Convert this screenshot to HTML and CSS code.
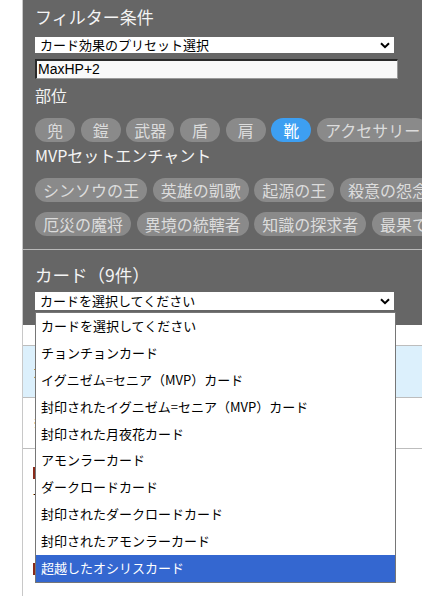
FILE: index.html
```html
<!DOCTYPE html>
<html lang="ja">
<head>
<meta charset="utf-8">
<title>カード検索</title>
<link rel="stylesheet" href="styles.css">
</head>
<body>
<div class="page">
  <div class="panel">
    <section class="filter">
      <h2 class="title">フィルター条件</h2>
      <div class="select preset">
        <span>カード効果のプリセット選択</span>
        <svg class="chev" viewBox="0 0 10 7" width="10" height="7"><path d="M1 1.2 L5 5.2 L9 1.2" fill="none" stroke="#000" stroke-width="2"/></svg>
      </div>
      <div class="input">MaxHP+2</div>
      <h3 class="label">部位</h3>
      <div class="tags">
        <span class="tag single">兜</span>
        <span class="tag single">鎧</span>
        <span class="tag">武器</span>
        <span class="tag single">盾</span>
        <span class="tag single">肩</span>
        <span class="tag single active">靴</span>
        <span class="tag">アクセサリー</span>
      </div>
      <h3 class="label mvp">MVPセットエンチャント</h3>
      <div class="tags row2">
        <span class="tag">シンソウの王</span>
        <span class="tag">英雄の凱歌</span>
        <span class="tag">起源の王</span>
        <span class="tag">殺意の怨念</span>
      </div>
      <div class="tags row3">
        <span class="tag">厄災の魔将</span>
        <span class="tag">異境の統轄者</span>
        <span class="tag">知識の探求者</span>
        <span class="tag">最果ての者</span>
      </div>
    </section>
    <section class="cards">
      <h2 class="title card-title">カード（9件）</h2>
      <div class="select-wrap">
        <div class="select card-select">
          <span>カードを選択してください</span>
          <svg class="chev" viewBox="0 0 10 7" width="10" height="7"><path d="M1 1.2 L5 5.2 L9 1.2" fill="none" stroke="#000" stroke-width="2"/></svg>
        </div>
        <ul class="dropdown">
          <li>カードを選択してください</li>
          <li>チョンチョンカード</li>
          <li>イグニゼム=セニア（MVP）カード</li>
          <li>封印されたイグニゼム=セニア（MVP）カード</li>
          <li>封印された月夜花カード</li>
          <li>アモンラーカード</li>
          <li>ダークロードカード</li>
          <li>封印されたダークロードカード</li>
          <li>封印されたアモンラーカード</li>
          <li class="hl">超越したオシリスカード</li>
        </ul>
      </div>
    </section>
  </div>
  <div class="results">
    <div class="head-row">カード名</div>
    <div class="note-row">※</div>
    <div class="item"><span class="thumb"></span><span class="dash">-</span></div>
    <div class="item short"><span class="thumb"></span></div>
  </div>
</div>
</body>
</html>
```
FILE: styles.css
```css
html, body {
  margin: 0;
  padding: 0;
  width: 422px;
  height: 596px;
  overflow: hidden;
  background: #fff;
}
body {
  font-family: "Noto Sans CJK JP", "Liberation Sans", sans-serif;
  color: #000;
}
.page {
  margin-left: 22px;
  border-left: 1px solid #c8c8c8;
  width: 620px;
  height: 596px;
  overflow: hidden;
}
.panel {
  background: #666;
  margin-left: -1px;
  padding-left: 13px;
}
.filter {
  padding-top: 4px;
  padding-bottom: 13px;
  border-bottom: 1px solid #b8b8b8;
  margin-left: -13px;
  padding-left: 13px;
}
.title {
  margin: 0;
  font-size: 17px;
  line-height: 26px;
  font-weight: normal;
  color: #f4f4f4;
}
.label {
  margin: 4px 0 0;
  font-size: 16px;
  line-height: 24px;
  font-weight: normal;
  color: #f4f4f4;
}
.label.mvp { margin-top: 1px; }
.select {
  width: 359px;
  box-sizing: border-box;
  background: #fff;
  display: flex;
  align-items: center;
  justify-content: space-between;
  padding: 0 4px 0 5px;
  font-size: 13px;
  color: #000;
}
.preset {
  margin-top: 7px;
  height: 16px;
  line-height: 16px;
}
.chev { display: block; }
.input {
  margin-top: 6px;
  width: 363px;
  height: 20px;
  box-sizing: border-box;
  background: #f9f9f9;
  border-top: 2px solid #2a2a2a;
  border-left: 2px solid #2a2a2a;
  border-right: 1px solid #9a9a9a;
  border-bottom: 1px solid #9a9a9a;
  font-family: "Liberation Sans", "Noto Sans CJK JP", sans-serif;
  font-size: 14px;
  line-height: 16px;
  padding-left: 1px;
}
.tags {
  display: flex;
  gap: 5.67px;
  margin-top: 11px;
  white-space: nowrap;
}
.tags.row2 { margin-top: 11px; }
.tags.row3 { margin-top: 10px; }
.tag {
  display: inline-block;
  height: 24px;
  line-height: 24px;
  padding: 0 8px;
  border-radius: 12px;
  background: #8a8a8a;
  color: #dcdcdc;
  font-size: 16px;
  text-align: center;
}
.tag.single {
  min-width: 40px;
  padding: 0;
  box-sizing: border-box;
}
.tag.active {
  background: #3d9ff2;
  color: #fff;
}
.cards {
  padding-top: 12px;
  padding-bottom: 15px;
}
.card-title {
  font-size: 17.5px;
}
.select-wrap {
  position: relative;
  margin-top: 4px;
  width: 359px;
}
.card-select {
  height: 18px;
  line-height: 18px;
}
.dropdown {
  position: absolute;
  left: 0;
  top: 20px;
  width: 361px;
  box-sizing: border-box;
  margin: 0;
  padding: 0;
  list-style: none;
  background: #fff;
  border: 1px solid #767676;
  z-index: 10;
}
.dropdown li {
  height: 26.9px;
  line-height: 26.9px;
  padding-left: 5px;
  font-size: 13px;
  color: #000;
  white-space: nowrap;
}
.dropdown li.hl {
  background: #3467d0;
  color: #fff;
}
.results {
  padding-top: 20px;
}
.head-row {
  height: 51px;
  background: #dcf0fc;
  border-top: 1px solid #bdbdbd;
  border-bottom: 1px solid #bdbdbd;
  padding-left: 10px;
  font-size: 13px;
  line-height: 51px;
}
.note-row {
  height: 50px;
  border-bottom: 1px solid #bdbdbd;
  padding-left: 10px;
  font-size: 13px;
  line-height: 50px;
}
.item {
  height: 78px;
  padding-left: 10px;
}
.item.short { height: 40px; }
.item .thumb {
  display: block;
  margin-top: 18px;
  width: 40px;
  height: 12px;
  border-left: 2px solid #8a2a1a;
}
.item .dash {
  display: block;
  margin-top: 6px;
  font-size: 13px;
  line-height: 16px;
}
```
